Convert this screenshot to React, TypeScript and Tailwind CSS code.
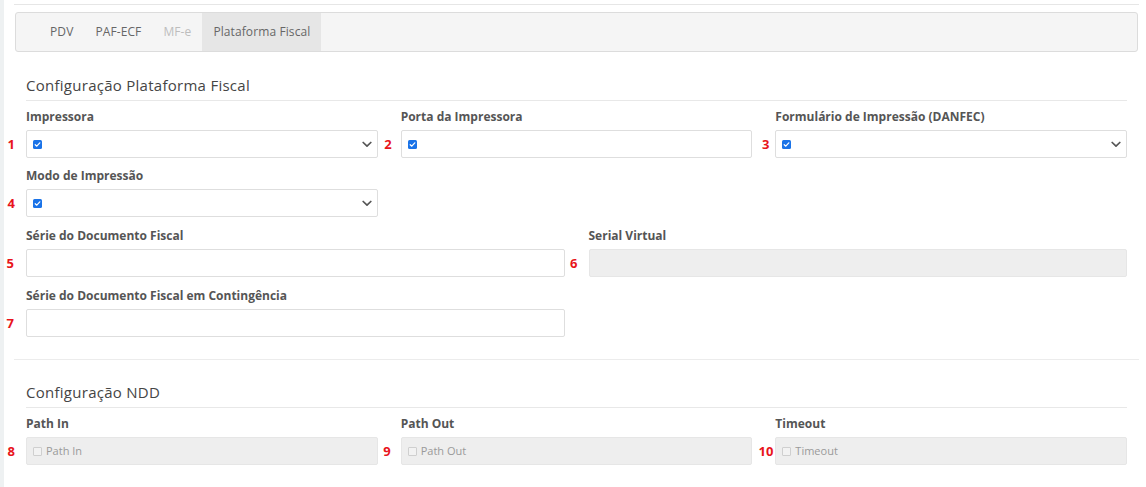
import React from "react";

const font = { fontFamily: '"Open Sans", "Liberation Sans", sans-serif' };

function Check() {
  return (
    <span className="inline-flex h-[9px] w-[9px] items-center justify-center rounded-[1.5px] bg-[#1a73e8]">
      <svg width="7" height="7" viewBox="0 0 7 7">
        <path d="M1.2 3.7 L2.8 5.2 L5.8 1.8" fill="none" stroke="#fff" strokeWidth="1.2" strokeLinecap="round" strokeLinejoin="round" />
      </svg>
    </span>
  );
}

function Chevron() {
  return (
    <svg width="10" height="7" viewBox="0 0 10 7" className="shrink-0">
      <path d="M1.2 1.5 L5 5.2 L8.8 1.5" fill="none" stroke="#555" strokeWidth="1.7" strokeLinecap="round" strokeLinejoin="round" />
    </svg>
  );
}

function Num({ n, cls }: { n: string; cls: string }) {
  return (
    <span
      className={
        "absolute top-1/2 -translate-y-1/2 text-[13px] font-bold leading-none text-[#e8141b] " + cls
      }
    >
      {n}
    </span>
  );
}

function Label({ children }: { children: React.ReactNode }) {
  return <div className="mb-[5px] h-[16px] text-[12px] font-bold leading-[16px] text-[#555]">{children}</div>;
}

function SelectBox({ n, cls, chevron = true }: { n: string; cls: string; chevron?: boolean }) {
  return (
    <div className="relative">
      <Num n={n} cls={cls} />
      <div className="flex h-[28px] items-center justify-between rounded-[2px] border border-[#dedede] bg-white pl-[6px] pr-[5px]">
        <Check />
        {chevron && <Chevron />}
      </div>
    </div>
  );
}

function TextBox({ n, cls, disabled = false }: { n: string; cls: string; disabled?: boolean }) {
  return (
    <div className="relative">
      <Num n={n} cls={cls} />
      <div
        className={
          "h-[28px] rounded-[2px] border " +
          (disabled ? "border-[#e6e6e6] bg-[#eeeeee]" : "border-[#dedede] bg-white")
        }
      />
    </div>
  );
}

function PlaceholderBox({ n, cls, text }: { n: string; cls: string; text: string }) {
  return (
    <div className="relative">
      <Num n={n} cls={cls} />
      <div className="flex h-[28px] items-center gap-[4px] rounded-[2px] border border-[#e6e6e6] bg-[#eeeeee] pl-[6px]">
        <span className="h-[9px] w-[9px] rounded-[1px] border border-[#cfcfcf] bg-[#f2f2f2]" />
        <span className="text-[11px] text-[#9a9a9a]">{text}</span>
      </div>
    </div>
  );
}

function SectionTitle({ children }: { children: React.ReactNode }) {
  return (
    <div className="border-b border-[#e8e8e8] pb-[5px] text-[15px] leading-[20px] tracking-[0.27px] text-[#454545]">
      {children}
    </div>
  );
}

export default function App() {
  return (
    <div className="flex min-h-[487px] w-[1146px] bg-white" style={font}>
      <div className="w-[4px] shrink-0 bg-[#eef1f2]" />
      <div className="flex-1 pl-[10px] pr-[7px]">
        <div className="mt-[4px] h-px bg-[#e6e6e6]" />
        <div className="ml-px mr-px mt-[7px] flex h-[40px] rounded-[3px] border border-[#dcdcdc] bg-[#f5f5f5] pl-[23px] text-[12px] tracking-[0.1px] text-[#666]">
          <div className="flex items-center px-[11px]">PDV</div>
          <div className="flex items-center px-[11px]">PAF-ECF</div>
          <div className="flex items-center px-[11px] text-[#bdbdbd]">MF-e</div>
          <div className="flex items-center bg-[#e6e6e6] px-[11px]">Plataforma Fiscal</div>
        </div>

        <div className="pl-[12px] pr-[12px]">
          <div className="mt-[23px]">
            <SectionTitle>Configuração Plataforma Fiscal</SectionTitle>
          </div>

          <div className="mt-[8px] grid grid-cols-3 gap-x-[23px]">
            <div>
              <Label>Impressora</Label>
              <SelectBox n="1" cls="right-[calc(100%+11px)]" />
            </div>
            <div>
              <Label>Porta da Impressora</Label>
              <SelectBox n="2" cls="right-[calc(100%+9px)]" chevron={false} />
            </div>
            <div>
              <Label>Formulário de Impressão (DANFEC)</Label>
              <SelectBox n="3" cls="right-[calc(100%+6px)]" />
            </div>
          </div>

          <div className="mt-[10px] grid grid-cols-3 gap-x-[23px]">
            <div>
              <Label>Modo de Impressão</Label>
              <SelectBox n="4" cls="right-[calc(100%+11px)]" />
            </div>
          </div>

          <div className="mt-[11px] grid grid-cols-2 gap-x-[24px]">
            <div>
              <Label>Série do Documento Fiscal</Label>
              <TextBox n="5" cls="right-[calc(100%+12px)]" />
            </div>
            <div>
              <Label>Serial Virtual</Label>
              <TextBox n="6" cls="right-[calc(100%+11px)]" disabled />
            </div>
          </div>

          <div className="mt-[11px] grid grid-cols-2 gap-x-[24px]">
            <div>
              <Label>Série do Documento Fiscal em Contingência</Label>
              <TextBox n="7" cls="right-[calc(100%+12px)]" />
            </div>
          </div>
        </div>

        <div className="mt-[22px] h-px bg-[#ececec]" />

        <div className="pl-[12px] pr-[12px]">
          <div className="mt-[22px]">
            <SectionTitle>Configuração NDD</SectionTitle>
          </div>
          <div className="mt-[8px] grid grid-cols-3 gap-x-[23px]">
            <div>
              <Label>Path In</Label>
              <PlaceholderBox n="8" cls="right-[calc(100%+11px)]" text="Path In" />
            </div>
            <div>
              <Label>Path Out</Label>
              <PlaceholderBox n="9" cls="right-[calc(100%+10px)]" text="Path Out" />
            </div>
            <div>
              <Label>Timeout</Label>
              <PlaceholderBox n="10" cls="right-[calc(100%+2px)]" text="Timeout" />
            </div>
          </div>
        </div>
      </div>
    </div>
  );
}
